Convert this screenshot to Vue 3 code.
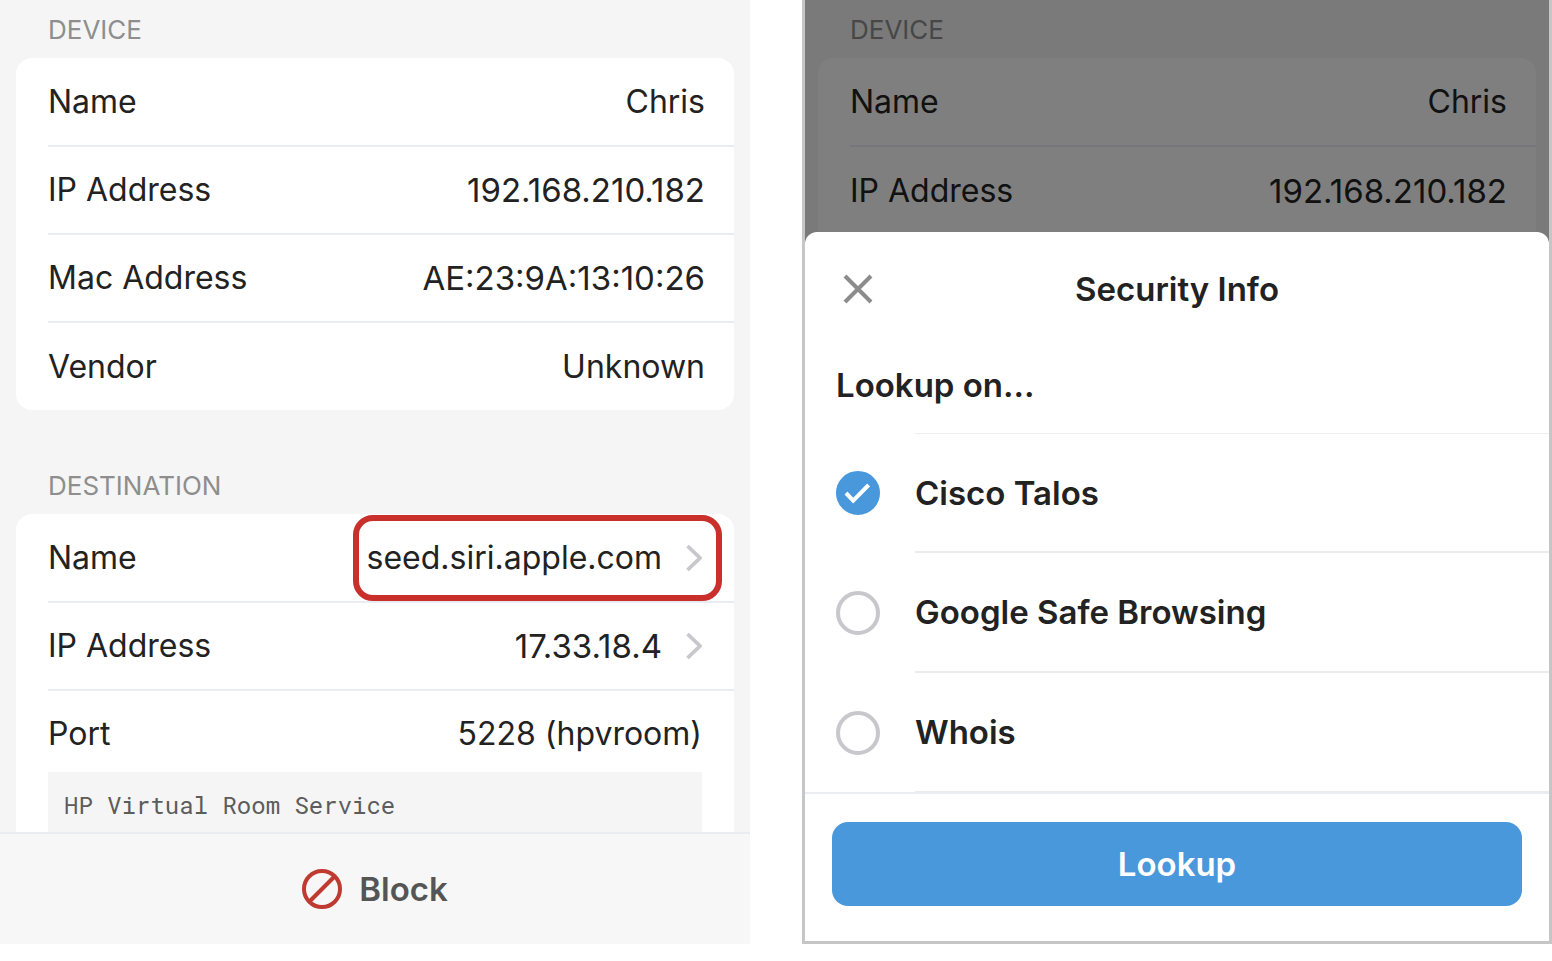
<script setup>
import { ref } from 'vue'

const device = [
  { label: 'Name', value: 'Chris' },
  { label: 'IP Address', value: '192.168.210.182', numeric: true },
  { label: 'Mac Address', value: 'AE:23:9A:13:10:26', numeric: true },
  { label: 'Vendor', value: 'Unknown' },
]
const destination = [
  { label: 'Name', value: 'seed.siri.apple.com', marked: true },
  { label: 'IP Address', value: '17.33.18.4', numeric: true },
]
const services = ['Cisco Talos', 'Google Safe Browsing', 'Whois']
const selected = ref('Cisco Talos')
</script>

<template>
  <main class="screens">
    <section class="screen details">
      <div class="content">
        <h2 class="group-title">Device</h2>
        <dl class="card">
          <div v-for="row in device" :key="row.label" class="row">
            <dt>{{ row.label }}</dt>
            <dd :class="{ numeric: row.numeric }">{{ row.value }}</dd>
          </div>
        </dl>
        <h2 class="group-title spaced">Destination</h2>
        <dl class="card">
          <div v-for="row in destination" :key="row.label" class="row">
            <dt>{{ row.label }}</dt>
            <dd class="linked" :class="{ numeric: row.numeric }">
              <a href="#" class="link" :class="{ marked: row.marked }">
                <span>{{ row.value }}</span>
                <svg width="16" height="28" viewBox="0 0 16 28" fill="none" stroke="#c7c7cc" stroke-width="3.8" aria-hidden="true">
                  <path d="M1.5 2 14 14 1.5 26" />
                </svg>
              </a>
            </dd>
          </div>
          <div class="row port">
            <dt>Port</dt>
            <dd>5228 (hpvroom)</dd>
          </div>
          <dd class="note">HP Virtual Room Service</dd>
        </dl>
      </div>
      <footer class="actions">
        <button type="button" class="block">
          <svg width="40" height="40" viewBox="0 0 40 40" fill="none" stroke="#bf3a30" stroke-width="4" aria-hidden="true">
            <circle cx="20" cy="20" r="18" />
            <path d="M7.5 32.5 32.5 7.5" />
          </svg>
          Block
        </button>
      </footer>
    </section>

    <section class="screen lookup">
      <div class="behind">
        <h2 class="group-title">Device</h2>
        <dl class="card">
          <div v-for="row in device.slice(0, 2)" :key="row.label" class="row">
            <dt>{{ row.label }}</dt>
            <dd :class="{ numeric: row.numeric }">{{ row.value }}</dd>
          </div>
        </dl>
      </div>
      <div class="shade"></div>
      <form class="sheet" @submit.prevent>
        <header class="sheet-head">
          <button type="button" class="close" aria-label="Close">
            <svg width="30" height="30" viewBox="0 0 30 30" fill="none" stroke="#8c8c8c" stroke-width="4" aria-hidden="true">
              <path d="M2 2 28 28M28 2 2 28" />
            </svg>
          </button>
          <h1>Security Info</h1>
        </header>
        <fieldset class="options">
          <legend>Lookup on...</legend>
          <label v-for="name in services" :key="name" class="option">
            <span class="mark">
              <input v-model="selected" type="radio" name="service" :value="name" />
              <svg v-if="selected === name" width="44" height="44" viewBox="0 0 44 44" fill="none" stroke="#fff" stroke-width="4" aria-hidden="true">
                <path d="M10 22 17.2 29.6 32.6 14" />
              </svg>
            </span>
            <span class="option-name">{{ name }}</span>
          </label>
        </fieldset>
        <footer class="sheet-foot">
          <button type="submit" class="submit">Lookup</button>
        </footer>
      </form>
    </section>
  </main>
</template>

<style>
body {
  margin: 0;
  background: #fff;
}
</style>

<style scoped>
* {
  box-sizing: border-box;
}
.screens {
  display: grid;
  grid-template-columns: 1fr 1fr;
  column-gap: 52px;
  height: 100vh;
  min-height: 780px;
  padding-bottom: 17px;
  font-family: Inter, "Liberation Sans", sans-serif;
  font-size: 32px;
  line-height: 40px;
  color: #222;
}
.screen {
  min-width: 0;
  min-height: 0;
  overflow: hidden;
}
h1,
h2,
dl,
dd {
  margin: 0;
}
button {
  font: inherit;
  font-size: 33px;
  font-weight: 600;
  border: 0;
  padding: 0;
  cursor: pointer;
}
svg {
  display: block;
  flex: none;
}
.details {
  display: flex;
  flex-direction: column;
  background: #f5f5f5;
}
.content {
  flex: 1;
  min-height: 0;
  overflow: hidden;
  padding: 0 16px;
}
.group-title {
  padding: 14px 0 12px 32px;
  font-size: 26px;
  line-height: 32px;
  font-weight: 400;
  text-transform: uppercase;
  color: #8e8e8e;
}
.spaced {
  padding-top: 60px;
}
.card {
  padding: 1px 0 0 32px;
  border-radius: 16px;
  background: #fff;
}
.row {
  display: flex;
  align-items: center;
  justify-content: space-between;
  height: 88px;
  padding-right: 29px;
  border-bottom: 2px solid #e9edf2;
  white-space: nowrap;
}
.row:last-child {
  height: 87px;
  border-bottom: 0;
}
.row:has(.linked) {
  padding-right: 12px;
}
.numeric {
  font-size: 33px;
}
.link {
  display: flex;
  align-items: center;
  gap: 24px;
  height: 86px;
  padding: 0 20px 0 15px;
  color: inherit;
  text-decoration: none;
}
.marked {
  padding: 0 14px 0 8px;
  border: 6px solid #c9302c;
  border-radius: 20px;
}
.port {
  height: 81px;
  padding: 5px 32px 0 0;
  border-bottom: 0;
}
.note {
  height: 88px;
  margin-right: 32px;
  padding: 17px 16px;
  background: #f5f5f5;
  font-family: "Roboto Mono", "Liberation Mono", monospace;
  font-size: 24px;
  line-height: 32px;
  color: #5c5c5c;
}
.actions {
  display: flex;
  flex: none;
  height: 112px;
  border-top: 2px solid #e9edf2;
  background: #f7f7f7;
}
.block {
  display: flex;
  flex: 1;
  align-items: center;
  justify-content: center;
  gap: 17px;
  background: none;
  color: #555;
}
.lookup {
  display: grid;
  grid-template: minmax(0, 1fr) / minmax(0, 1fr);
  border: 3px solid #c6c6c6;
  border-top: 0;
}
.behind,
.shade,
.sheet {
  grid-area: 1 / 1;
}
.behind {
  padding: 0 13px;
  background: #f5f5f5;
}
.behind .card {
  border-radius: 16px 16px 0 0;
}
.shade {
  background: rgba(0, 0, 0, 0.5);
}
.shade,
.sheet {
  z-index: 1;
}
.sheet {
  align-self: end;
  border-radius: 12px 12px 0 0;
  background: #fff;
  font-size: 33px;
  font-weight: 600;
}
.sheet-head {
  display: grid;
  grid-template-columns: 30px 1fr 30px;
  align-items: center;
  height: 113px;
  padding: 0 38px;
}
.close {
  background: none;
}
h1 {
  font-size: inherit;
  font-weight: 600;
  text-align: center;
}
.options {
  min-width: 0;
  margin: 0;
  padding: 0 0 0 31px;
  border: 0;
}
legend {
  height: 88px;
  padding: 20px 0;
}
.option {
  display: flex;
  align-items: center;
  gap: 35px;
  height: 120px;
}
.option:last-child {
  height: 119px;
}
.option-name {
  display: flex;
  flex: 1;
  align-items: center;
  align-self: stretch;
  border-bottom: 2px solid #e9edf2;
}
.option:last-child .option-name {
  border-bottom-width: 1px;
}
.option:first-of-type .option-name {
  border-top: 1px solid #eef0f3;
}
.mark {
  display: grid;
}
.mark > * {
  grid-area: 1 / 1;
}
.mark svg {
  z-index: 1;
  pointer-events: none;
}
input {
  appearance: none;
  width: 44px;
  height: 44px;
  margin: 0;
  border: 4px solid #c7c7cc;
  border-radius: 50%;
}
input:checked {
  border-color: #4998dc;
  background: #4998dc;
}
.sheet-foot {
  padding: 28px 27px 35px;
  border-top: 2px solid #e9edf2;
}
.submit {
  display: block;
  width: 100%;
  height: 84px;
  border-radius: 16px;
  background: #4998dc;
  color: #fff;
}
</style>
